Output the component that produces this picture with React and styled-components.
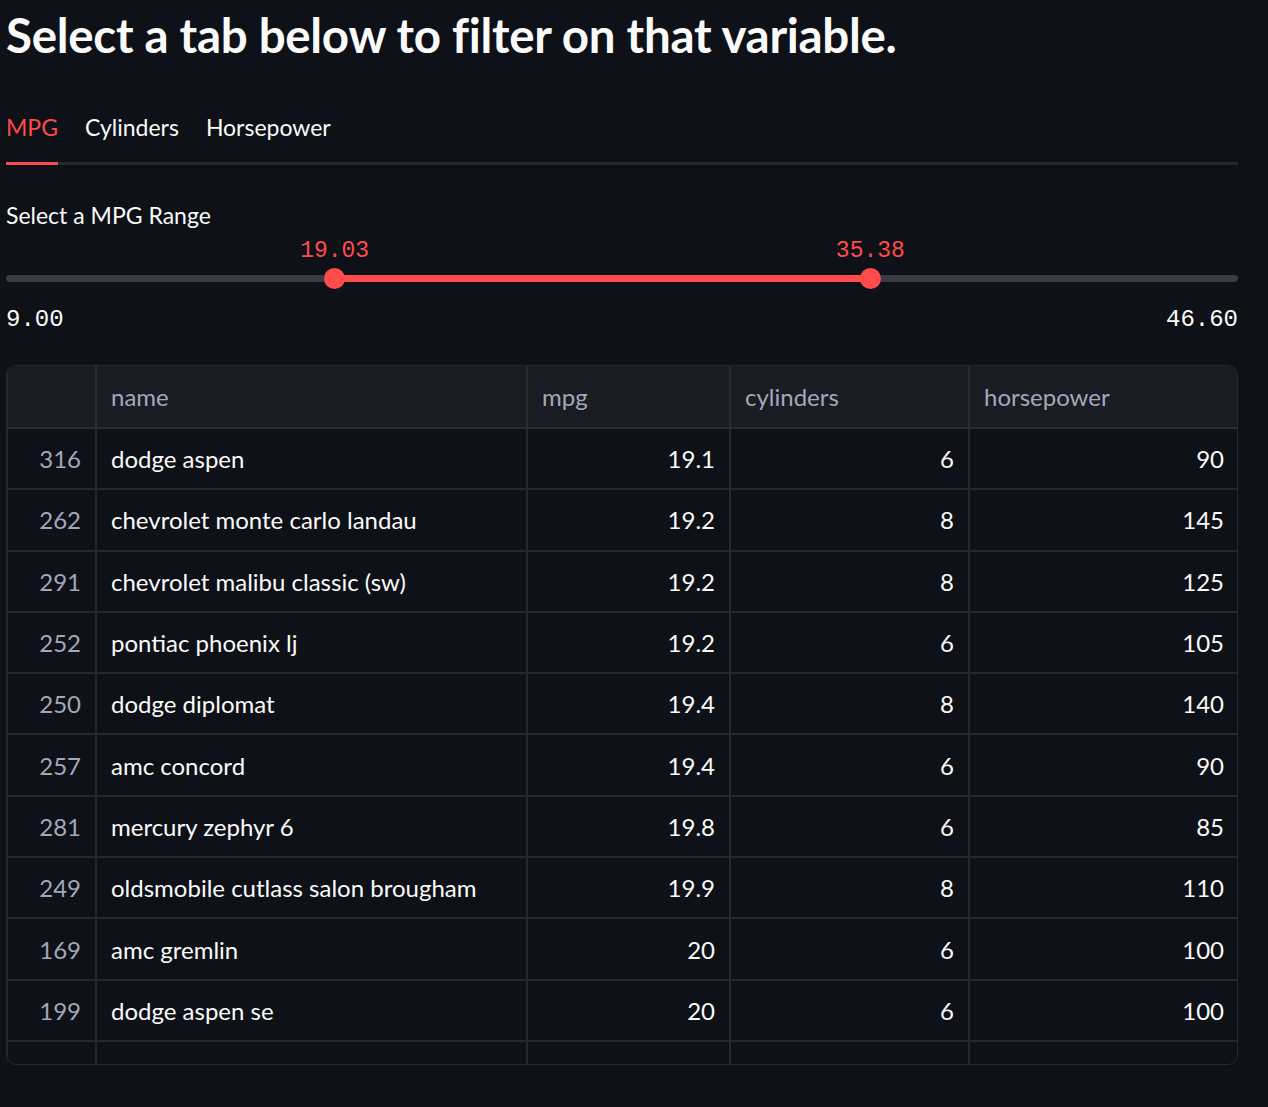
import React from 'react'
import styled, { createGlobalStyle } from 'styled-components'

const GlobalStyle = createGlobalStyle`
  html, body {
    margin: 0;
    padding: 0;
    background: #0e1117;
  }
  body {
    font-family: Lato, "Noto Sans", sans-serif;
    color: #fafafa;
  }
`

const Page = styled.div`
  width: 1232px;
  padding: 0 30px 42px 6px;
  background: #0e1117;
`

const Title = styled.h1`
  margin: 0;
  padding: 8px 0 0 0;
  height: 62px;
  font-size: 47.5px;
  font-weight: 700;
  line-height: 54px;
  letter-spacing: -0.3px;
  color: #fafafa;
`

const TabBar = styled.div`
  display: flex;
  gap: 27px;
  margin-top: 42px;
  border-bottom: 3px solid #262730;
`

const Tab = styled.button`
  background: none;
  border: none;
  padding: 0 0 20px 0;
  margin-bottom: -3px;
  font-family: inherit;
  font-size: 23px;
  line-height: 30px;
  color: ${(p) => (p.$active ? '#ff4b4b' : '#fafafa')};
  border-bottom: 3px solid ${(p) => (p.$active ? '#ff4b4b' : 'transparent')};
  cursor: pointer;
`

const Label = styled.div`
  margin-top: 35px;
  font-size: 23px;
  line-height: 30px;
  color: #fafafa;
`

const SliderWrap = styled.div`
  position: relative;
  height: 94px;
`

const Track = styled.div`
  position: absolute;
  left: 0;
  right: 0;
  top: 45px;
  height: 7px;
  border-radius: 4px;
  background: #3a3d46;
`

const Fill = styled.div`
  position: absolute;
  top: 45px;
  height: 7px;
  background: #ff4b4b;
`

const Thumb = styled.div`
  position: absolute;
  top: 38px;
  width: 21px;
  height: 21px;
  margin-left: -10.5px;
  border-radius: 50%;
  background: #ff4b4b;
`

const ThumbValue = styled.div`
  position: absolute;
  top: 6px;
  transform: translateX(-50%);
  font-family: "Liberation Mono", "DejaVu Sans Mono", monospace;
  font-size: 23px;
  line-height: 30px;
  color: #ff4b4b;
`

const Ticks = styled.div`
  display: flex;
  justify-content: space-between;
  margin-top: -19px;
  font-family: "Liberation Mono", "DejaVu Sans Mono", monospace;
  font-size: 24px;
  line-height: 30px;
  color: #fafafa;
`

const TableFrame = styled.div`
  margin-top: 30px;
  height: 698px;
  border: 1px solid #262830;
  border-radius: 10px;
  overflow: hidden;
`

const Table = styled.table`
  border-collapse: collapse;
  table-layout: fixed;
  width: 1232px;
  margin: -1px 0 0 -1px;
  font-size: 24px;
`

const HeadCell = styled.th`
  height: 62px;
  padding: 0 14px;
  text-align: left;
  font-weight: 400;
  color: #a3a8b8;
  background: #1a1c24;
  border: 2px solid #2a2c33;
  border-top: none;
`

const Cell = styled.td`
  height: 59.3px;
  padding: 0 14px;
  text-align: ${(p) => (p.$num ? 'right' : 'left')};
  color: ${(p) => (p.$index ? '#a3a8b8' : '#fafafa')};
  border: 2px solid #262830;
  white-space: nowrap;
  overflow: hidden;
  text-overflow: clip;
`

const rows = [
  [316, 'dodge aspen', '19.1', 6, 90],
  [262, 'chevrolet monte carlo landau', '19.2', 8, 145],
  [291, 'chevrolet malibu classic (sw)', '19.2', 8, 125],
  [252, 'pontiac phoenix lj', '19.2', 6, 105],
  [250, 'dodge diplomat', '19.4', 8, 140],
  [257, 'amc concord', '19.4', 6, 90],
  [281, 'mercury zephyr 6', '19.8', 6, 85],
  [249, 'oldsmobile cutlass salon brougham', '19.9', 8, 110],
  [169, 'amc gremlin', '20', 6, 100],
  [199, 'dodge aspen se', '20', 6, 100],
  [167, 'chevrolet nova custom', '20', 6, 110],
]

const min = 9.0
const max = 46.6
const low = 19.03
const high = 35.38
const pct = (v) => ((v - min) / (max - min)) * 100

function App() {
  return (
    <Page>
      <GlobalStyle />
      <Title>Select a tab below to filter on that variable.</Title>

      <TabBar>
        <Tab $active>MPG</Tab>
        <Tab>Cylinders</Tab>
        <Tab>Horsepower</Tab>
      </TabBar>

      <Label>Select a MPG Range</Label>
      <SliderWrap>
        <Track />
        <Fill style={{ left: `${pct(low)}%`, width: `${pct(high) - pct(low)}%` }} />
        <Thumb style={{ left: `${pct(low)}%` }} />
        <Thumb style={{ left: `${pct(high)}%` }} />
        <ThumbValue style={{ left: `${pct(low)}%` }}>{low.toFixed(2)}</ThumbValue>
        <ThumbValue style={{ left: `${pct(high)}%` }}>{high.toFixed(2)}</ThumbValue>
      </SliderWrap>
      <Ticks>
        <span>{min.toFixed(2)}</span>
        <span>{max.toFixed(2)}</span>
      </Ticks>

      <TableFrame>
        <Table>
          <colgroup>
            <col style={{ width: 89 }} />
            <col style={{ width: 431 }} />
            <col style={{ width: 203 }} />
            <col style={{ width: 239 }} />
            <col style={{ width: 270 }} />
          </colgroup>
          <thead>
            <tr>
              <HeadCell />
              <HeadCell>name</HeadCell>
              <HeadCell>mpg</HeadCell>
              <HeadCell>cylinders</HeadCell>
              <HeadCell>horsepower</HeadCell>
            </tr>
          </thead>
          <tbody>
            {rows.map((r) => (
              <tr key={r[0]}>
                <Cell $num $index>{r[0]}</Cell>
                <Cell>{r[1]}</Cell>
                <Cell $num>{r[2]}</Cell>
                <Cell $num>{r[3]}</Cell>
                <Cell $num>{r[4]}</Cell>
              </tr>
            ))}
          </tbody>
        </Table>
      </TableFrame>
    </Page>
  )
}

export default App
